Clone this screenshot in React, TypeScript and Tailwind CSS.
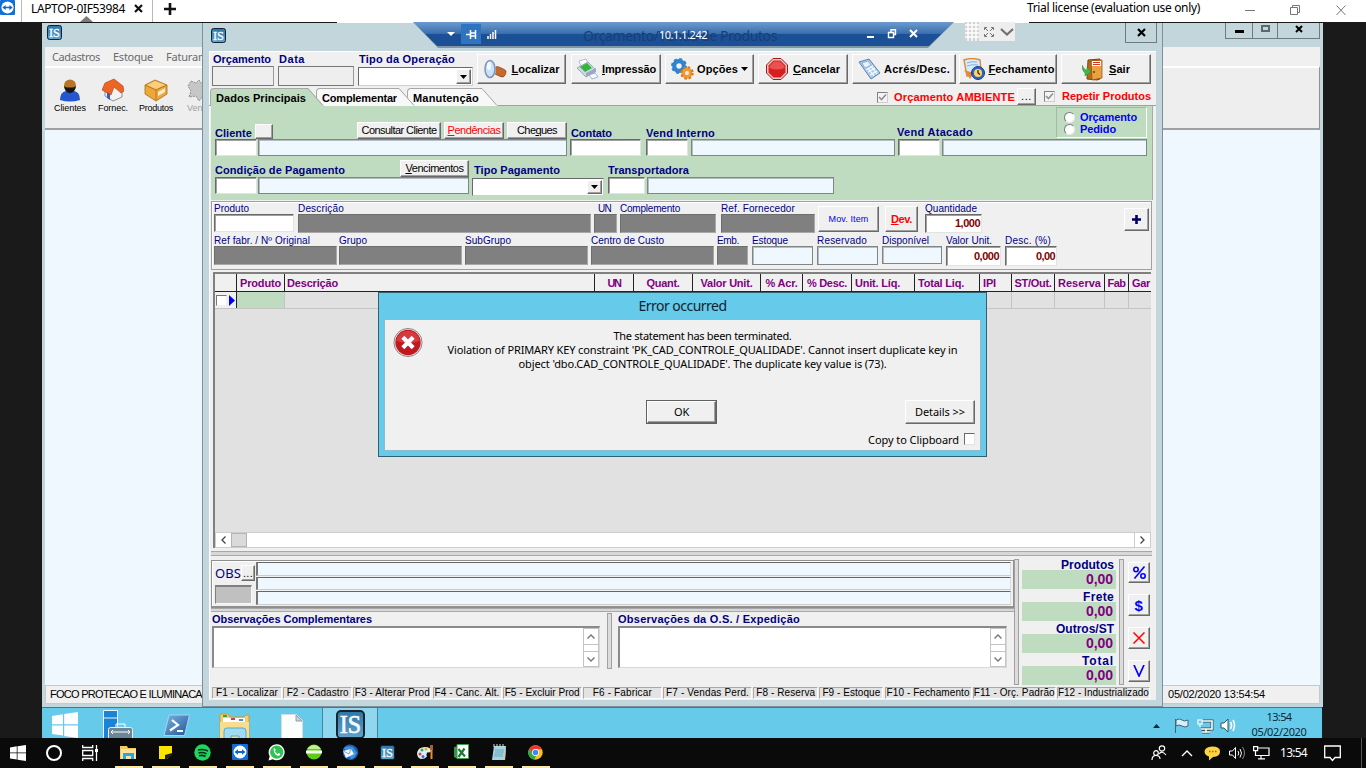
import React, { useLayoutEffect, useRef, useState } from "react";

type Kids = { children?: React.ReactNode };

/* One line of text whose tracking is adjusted so that it spans `w` pixels. */
function T({ w, c = "", children }: Kids & { w: number; c?: string }) {
  const ref = useRef<HTMLSpanElement>(null);
  const [ls, setLs] = useState(0);
  useLayoutEffect(() => {
    const el = ref.current;
    if (!el) return;
    const n = (el.textContent || "").length;
    setLs((w - el.getBoundingClientRect().width) / n);
  }, [w]);
  return (
    <span ref={ref} className={"block w-max shrink-0 whitespace-nowrap leading-none " + c} style={{ letterSpacing: ls + "px" }}>
      {children}
    </span>
  );
}

const ui = "font-['Noto_Sans',sans-serif]";
const bold = "text-[11px] font-bold text-[#000080]";

function Btn({ c = "", children }: Kids & { c?: string }) {
  return (
    <div className={"flex shrink-0 items-center justify-center border border-t-white border-l-white border-r-[#696969] border-b-[#696969] bg-[#f0f0f0] shadow-[inset_-1px_-1px_0_#a0a0a0] " + c}>
      {children}
    </div>
  );
}
const White = ({ c = "" }: { c?: string }) => (
  <div className={"shrink-0 border border-t-[#696969] border-l-[#696969] border-r-[#e3e3e3] border-b-[#e3e3e3] bg-white shadow-[inset_1px_1px_0_#a0a0a0] " + c} />
);
const Alice = ({ c = "" }: { c?: string }) => (
  <div className={"shrink-0 border border-[#808686] bg-[#f0f8ff] shadow-[inset_1px_1px_0_#b5bcc2] " + c} />
);
const Dark = ({ c = "" }: { c?: string }) => (
  <div className={"h-[19px] shrink-0 border border-[#6e6e6e] border-r-[#a8a8a8] border-b-[#a8a8a8] bg-[#808080] " + c} />
);
function Combo({ c = "" }: { c?: string }) {
  return (
    <div className={"flex shrink-0 justify-end border border-[#696969] border-r-[#d0d0d0] border-b-[#d0d0d0] bg-white p-px " + c}>
      <Btn c="w-[15px]">
        <svg width="7" height="4"><path d="M0 0h7L3.500 4z" fill="#000" /></svg>
      </Btn>
    </div>
  );
}
function Check() {
  return (
    <div className="flex h-[11px] w-[11px] shrink-0 items-center justify-center border border-t-[#808080] border-l-[#808080] border-r-[#cfcfcf] border-b-[#cfcfcf] bg-[#f4f4f4]">
      <svg width="9" height="9" viewBox="0 0 9 9"><path d="M1 4l2.500 2.500L8 1.500" fill="none" stroke="#909090" strokeWidth="1.600" /></svg>
    </div>
  );
}
function IS({ s }: { s: number }) {
  return (
    <svg width={s} height={s} viewBox="0 0 30 30" className="shrink-0">
      <defs>
        <linearGradient id="isg" x1="0" y1="0" x2="0" y2="1"><stop offset="0" stopColor="#2f76a5" /><stop offset="1" stopColor="#5fa3cd" /></linearGradient>
      </defs>
      <rect x="1" y="1" width="28" height="28" rx="4" fill="url(#isg)" stroke="#16232e" strokeWidth="2" />
      <text x="15" y="24" textAnchor="middle" fontFamily="Liberation Serif, serif" fontSize="26" textLength="22" lengthAdjust="spacingAndGlyphs" fill="#f4fafe" stroke="#f4fafe" strokeWidth=".7">IS</text>
    </svg>
  );
}
function TeamViewer({ s }: { s: number }) {
  return (
    <svg width={s} height={s} viewBox="0 0 16 16" className="shrink-0">
      <rect width="16" height="16" rx="1" fill="#1070d8" />
      <circle cx="8" cy="8" r="6.500" fill="#fff" />
      <path d="M2.500 8l3.500-2.800v1.900h4V5.200L13.500 8 10 10.800V8.900H6v1.900z" fill="#0e68cc" />
    </svg>
  );
}

/* ---------- toolbar artwork ---------- */
const Lens = () => (
  <svg width="23" height="21" viewBox="0 0 23 21">
    <rect x="10" y="8" width="12" height="8" rx="3" transform="rotate(24 14 12)" fill="#c8682a" stroke="#8a4215" strokeWidth=".7" />
    <path d="M7 3l5 6v5l-5 4z" fill="#b8bcc4" />
    <ellipse cx="6" cy="10" rx="5" ry="8.500" fill="#c9e2fa" stroke="#8397b5" strokeWidth="1.600" />
    <ellipse cx="5" cy="7" rx="2" ry="4" fill="#fff" opacity=".8" />
  </svg>
);
const Printer = () => (
  <svg width="22" height="22" viewBox="0 0 22 22">
    <path d="M3 3l7-2 3 6-7 3z" fill="#fff" stroke="#9db0cc" strokeWidth=".8" />
    <path d="M1 10l11-6 8 8-10 7z" fill="#cfd6e4" stroke="#8c99b5" strokeWidth=".8" />
    <path d="M4 9l7-4 5 5-7 4z" fill="#36b53c" />
    <path d="M10 19v-4l10-5v4z" fill="#9aa7c6" />
    <path d="M13 17l6-2 3 4-6 2z" fill="#f4f8ff" stroke="#8c99b5" strokeWidth=".7" />
  </svg>
);
const Gears = () => (
  <svg width="23" height="22" viewBox="0 0 23 22">
    <circle cx="8" cy="8" r="4.800" fill="none" stroke="#2f83cf" strokeWidth="4.200" />
    <circle cx="8" cy="8" r="6.900" fill="none" stroke="#2f83cf" strokeWidth="2.200" strokeDasharray="3 2.420" />
    <circle cx="16" cy="15" r="3.800" fill="none" stroke="#f29a2e" strokeWidth="3.400" />
    <circle cx="16" cy="15" r="5.700" fill="none" stroke="#d97a18" strokeWidth="2" strokeDasharray="2.500 1.980" />
  </svg>
);
const Stop = () => (
  <svg width="22" height="22" viewBox="0 0 22 22">
    <path d="M7 .5h8L21.500 7v8L15 21.500H7L.5 15V7z" fill="#f0c8c8" stroke="#a51616" />
    <path d="M7.500 2.500h7l5 5v7l-5 5h-7l-5-5v-7z" fill="#d81f1f" />
    <path d="M8 3.500h6l4.500 4.500v2q-7 3-15 0V8z" fill="#ec5050" />
  </svg>
);
const Calc = () => (
  <svg width="23" height="22" viewBox="0 0 23 22">
    <path d="M1 4l10-3 11 14-9 6z" fill="#a9cbee" stroke="#5f83ad" />
    <path d="M4 5l6-2 3 4-6 3z" fill="#e6f3ff" stroke="#7193bb" strokeWidth=".6" />
    <path d="M8 12l7-4M10 14l7-4M12 17l7-4M10 10l6 8M13 8l6 8" stroke="#fff" strokeWidth="1.200" />
  </svg>
);
const Closing = () => (
  <svg width="24" height="23" viewBox="0 0 24 23">
    <path d="M2 2q8-3 16 0l1 10q-7 4-14 6z" fill="#d9ebfb" stroke="#d98b33" strokeWidth="1.400" />
    <path d="M5 5q5-2 10-1M5 8q5-2 11-1" stroke="#86aedb" fill="none" />
    <path d="M2 12l6 9 4-6z" fill="#e08a3c" />
    <circle cx="16" cy="15" r="6.500" fill="#2f63c4" stroke="#173c88" />
    <circle cx="16" cy="15" r="4" fill="#ffd560" />
    <path d="M16 12v3l2 1.500" stroke="#222" fill="none" strokeWidth="1.200" />
  </svg>
);
const Exit = () => (
  <svg width="22" height="23" viewBox="0 0 22 23">
    <path d="M6 2l12-1v20l-3 1L5 21z" fill="#b96a18" stroke="#7a4410" />
    <path d="M9 3l11-1v18l-10 2z" fill="#e9a243" stroke="#8a4d10" strokeWidth=".7" />
    <rect x="10" y="3" width="9" height="5" fill="#fff" />
    <path d="M11 4.500h7M11 6.500h7" stroke="#e03030" />
    <circle cx="12" cy="14" r="1" fill="#6b3b08" />
    <path d="M0 7q2 5 5 5V9l4 5-6 4v-3Q0 13 0 7z" fill="#46b648" stroke="#2b8c34" strokeWidth=".5" />
  </svg>
);

/* ---------- remote control session title ---------- */
function ClientBar() {
  return (
    <header className={"flex h-[22px] shrink-0 bg-white text-[12px] text-black " + ui}>
      <TeamViewer s={15} />
      <div className="relative ml-[6px] flex w-[132px] border-x border-[#b8b8b8] pt-[3px] pl-[9px]">
        <T w={94} c="text-[12px]">LAPTOP-0IF53984</T>
        <svg className="mt-px ml-[9px]" width="9" height="9"><path d="M1 1l7 7M8 1l-7 7" stroke="#111" strokeWidth="2.200" /></svg>
        <svg className="absolute bottom-0 left-[58px]" width="13" height="6"><path d="M0 6L6.500 0 13 6z" fill="#7a7a7a" /></svg>
      </div>
      <svg className="mt-[3px] ml-[11px]" width="12" height="12"><path d="M6 0v12M0 6h12" stroke="#111" strokeWidth="2.600" /></svg>
      <div className="ml-auto flex pr-[19px]">
        <T w={173} c="pt-[2px] text-[12px]">Trial license (evaluation use only)</T>
        <svg className="mt-[4px] ml-[44px]" width="103" height="13" fill="none" stroke="#777">
          <path d="M1 6.500h10M92.500 1.500l9 9.500M101.500 1.500l-9 9.500" /><path d="M46.500 3.500h7v7h-7zM48.500 3.500v-2h7v7h-2" />
        </svg>
      </div>
    </header>
  );
}

/* ---------- main application window behind ---------- */
function BackWindow() {
  return (
    <section className="absolute top-px left-0 flex h-[684px] w-[1281px] flex-col bg-[#c3d6dc] px-[3px] pb-[3px]">
      <div className="flex h-[24px] shrink-0 pl-[2px]">
        <div className="pt-[2px]"><IS s={15} /></div>
        <div className="ml-auto flex h-[16px] text-black">
          <div className="flex w-[28px] items-center justify-center border-x border-b border-[#6e7c82]"><div className="mt-[1px] h-[3px] w-[9px] bg-black" /></div>
          <div className="flex w-[24px] items-center justify-center border-b border-[#6e7c82]"><div className="-mt-[4px] h-[7px] w-[9px] border-2 border-[#5c6a70]" /></div>
          <div className="flex w-[43px] items-center justify-center border-x border-b border-[#6e7c82]">
            <svg width="8" height="8" className="-mt-[4px]"><path d="M1 1l6 6M7 1L1 7" stroke="#000" strokeWidth="2" /></svg>
          </div>
        </div>
      </div>
      <nav className={"flex h-[19px] shrink-0 gap-[13px] bg-[#f0f0f0] pt-[4px] pl-[7px] text-[11px] text-[#6b6b6b] " + ui}>
        <T w={48}>Cadastros</T><T w={40}>Estoque</T><T w={42}>Faturam</T>
      </nav>
      <div className="flex h-[64px] shrink-0 border-t-2 border-r border-b-2 border-t-white border-r-[#909090] border-b-[#a0a0a0] bg-[#eeeeee] pt-[10px] pl-[8px] font-['Liberation_Sans',sans-serif] text-black">
        <div className="flex w-[34px] flex-col items-center">
          <svg width="22" height="24" viewBox="0 0 22 24"><path d="M1 22q0-8 6-9h8q6 1 6 9-10 3-20 0z" fill="#2456cf" /><circle cx="11" cy="7.500" r="6" fill="#b87528" /><path d="M5 8q1 7 6 7t6-7q-2 2-6 1.500Q7 10 5 8z" fill="#151515" /></svg>
          <T w={32} c="mt-[2px] text-[9px]">Clientes</T>
        </div>
        <div className="ml-[9px] flex w-[34px] flex-col items-center">
          <svg width="22" height="24" viewBox="0 0 22 24"><path d="M3 10l8-7 9 7v9l-9 4-8-5z" fill="#f2f2f4" stroke="#777" strokeWidth=".8" /><path d="M0 12l3-7 9-4 9 7 1 5-3 2-7-6-3 8z" fill="#ee6422" stroke="#b13c0c" strokeWidth=".6" /><path d="M5 14l3 2v6l-3-2z" fill="#3c5ac0" /></svg>
          <T w={30} c="mt-[2px] text-[9px]">Fornec.</T>
        </div>
        <div className="ml-[9px] flex w-[34px] flex-col items-center">
          <svg width="24" height="24" viewBox="0 0 24 24"><path d="M1 7l10-5 12 5v9l-11 7L1 16z" fill="#eda83b" stroke="#a96b16" strokeWidth=".8" /><path d="M1 7l11 5 11-5M12 12v11" fill="none" stroke="#b87820" /><path d="M3 7l8-4 10 4-9 4z" fill="#f9cf7d" /><path d="M14 14l7-4v4l-7 4z" fill="#f5ead4" /></svg>
          <T w={34} c="mt-[2px] text-[9px]">Produtos</T>
        </div>
        <div className="ml-[14px] flex w-[34px] flex-col items-start text-[#a0a0a0]">
          <svg width="24" height="24" viewBox="0 0 24 24"><path d="M4 3l5 2 3-3 3 4 5 1-2 5 4 5-6 1-4 5-3-5-7 1 2-6-3-5z" fill="#c6c6c6" stroke="#8e8e8e" strokeDasharray="2 1" /></svg>
          <T w={30} c="mt-[2px] text-[9px]">Vendas</T>
        </div>
      </div>
      <div className="min-h-0 flex-1 bg-[#f0f8ff]" />
      <footer className="flex h-[19px] shrink-0 items-center border border-[#c9c9c9] bg-[#f0f0f0] pl-[4px] text-[11px] text-black">
        <T w={152} c="text-[11px]">FOCO PROTECAO E ILUMINACA</T>
        <div className="ml-auto w-[151px]"><T w={97} c="text-[11px]">05/02/2020 13:54:54</T></div>
      </footer>
    </section>
  );
}

/* ---------- order window ---------- */
function Tab({ w, active, body, children, z }: Kids & { w: number; active?: boolean; body: string; z: string }) {
  const fill = active ? "#c0dcc0" : "#f8f8f8";
  return (
    <div className={"relative flex h-[18px] shrink-0 " + z}>
      <div className={"flex items-center rounded-tl-[4px] border-t border-l border-[#a8a8a8] pl-[5px] " + body + (active ? " bg-[#c0dcc0]" : " bg-[#f8f8f8]")}>
        <T w={w} c="pt-px text-[11px] font-bold text-black">{children}</T>
      </div>
      <svg width="18" height="18" className="-ml-px">
        <path d="M0 0h2L18 18H0z" fill={fill} /><path d="M0 .5h2L17 17.500" fill="none" stroke="#a0a0a0" />
      </svg>
    </div>
  );
}

function TopTools() {
  const t = "text-[11px] font-bold text-black";
  return (
    <div className="flex h-[37px] shrink-0 items-start pt-[3px] pl-[3px]">
      <div className="w-[62px]"><T w={58} c={bold + " ml-px pb-px"}>Orçamento</T><div className="h-[20px] border border-[#777] border-r-[#999] bg-[#eeeeee]" /></div>
      <div className="ml-[4px] w-[76px]"><T w={26} c={bold + " ml-px pb-px"}>Data</T><div className="h-[20px] border border-[#777] border-r-[#999] bg-[#eeeeee]" /></div>
      <div className="ml-[4px] w-[115px]"><T w={96} c={bold + " ml-px pb-px"}>Tipo da Operação</T><Combo c="mt-px h-[19px]" /></div>
      <Btn c="ml-[4px] h-[30px] w-[89px] gap-[5px]"><Lens /><T w={48} c={t}><u>L</u>ocalizar</T></Btn>
      <Btn c="ml-[5px] h-[30px] w-[90px] gap-[4px]"><Printer /><T w={54} c={t}><u>I</u>mpressão</T></Btn>
      <Btn c="ml-[4px] h-[30px] w-[89px] gap-[3px]"><Gears /><T w={41} c={t}>Opções</T><svg width="7" height="4"><path d="M0 0h7L3.500 4z" /></svg></Btn>
      <Btn c="ml-[4px] h-[30px] w-[90px] gap-[5px]"><Stop /><T w={47} c={t}><u>C</u>ancelar</T></Btn>
      <Btn c="ml-[4px] h-[30px] w-[104px] gap-[3px]"><Calc /><T w={66} c={t}>Acrés/Desc.</T></Btn>
      <Btn c="ml-[3px] h-[30px] w-[98px] gap-[3px]"><Closing /><T w={66} c={t}><u>F</u>echamento</T></Btn>
      <Btn c="ml-[4px] h-[30px] w-[90px] gap-[5px]"><Exit /><T w={21} c={t}><u>S</u>air</T></Btn>
    </div>
  );
}

function TabRow() {
  return (
    <div className="flex h-[18px] shrink-0 border-b border-[#a0a0a0] pl-px">
      <Tab w={90} active body="w-[97px]" z="z-30">Dados Principais</Tab>
      <div className="-ml-[8px]"><Tab w={75} body="w-[82px]" z="z-20">Complementar</Tab></div>
      <div className="-ml-[8px]"><Tab w={66} body="w-[74px]" z="z-10">Manutenção</Tab></div>
      <div className="ml-auto flex items-start pr-[5px]">
        <div className="pt-[4px]"><Check /></div>
        <T w={121} c="mt-[4px] ml-[6px] text-[11px] font-bold text-[#ff0000]">Orçamento AMBIENTE</T>
        <Btn c="ml-[2px] h-[17px] w-[19px]"><T w={11} c="text-[11px] text-black">...</T></Btn>
        <div className="ml-[8px] pt-[3px]"><Check /></div>
        <T w={89} c="mt-[3px] ml-[7px] text-[11px] font-bold text-[#ff0000]">Repetir Produtos</T>
      </div>
    </div>
  );
}

const Radio = () => <span className="h-[11px] w-[11px] rounded-full border border-t-[#7c7c7c] border-l-[#7c7c7c] border-r-[#e8e8e8] border-b-[#e8e8e8] bg-white" />;

function GreenPanel() {
  const b = "h-[17px] text-[11px] text-black";
  return (
    <div className="ml-[2px] h-[94px] w-[942px] shrink-0 border-r border-[#9fb09f] bg-[#c0dcc0] pl-[4px]">
      <div className="flex h-[50px] items-end">
        <div className="w-[352px]">
          <div className="flex h-[17px] items-end">
            <T w={37} c={bold}>Cliente</T>
            <Btn c="ml-[3px] h-[15px] w-[18px]" />
            <Btn c={b + " ml-auto w-[84px]"}><T w={75} c="text-[11px]">Consultar Cliente</T></Btn>
            <Btn c={b + " ml-[3px] w-[60px]"}><T w={53} c="text-[11px] text-[#ff0000]"><u>P</u>endências</T></Btn>
            <Btn c={b + " ml-[3px] w-[60px]"}><T w={40} c="text-[11px]">Che<u>q</u>ues</T></Btn>
          </div>
          <div className="flex"><White c="h-[17px] w-[42px]" /><Alice c="ml-px h-[17px] w-[309px]" /></div>
        </div>
        <div className="ml-[3px] w-[71px]"><T w={41} c={bold + " ml-px"}>Contato</T><White c="h-[17px]" /></div>
        <div className="ml-[5px] w-[249px]">
          <T w={69} c={bold}>Vend Interno</T>
          <div className="flex"><White c="h-[17px] w-[42px]" /><Alice c="ml-[3px] h-[17px] w-[204px]" /></div>
        </div>
        <div className="ml-[3px] w-[249px]">
          <div className="flex h-[32px] items-end">
            <T w={76} c={bold + " -ml-px pb-px"}>Vend Atacado</T>
            <div className="mb-px ml-auto flex h-[31px] w-[91px] flex-col gap-px border border-[#a4b8a4] border-r-white border-b-white pt-[4px] pl-[7px]">
              <div className="flex items-center gap-[5px]"><Radio /><T w={57} c="text-[11px] font-bold text-[#0000ff]">Orçamento</T></div>
              <div className="flex items-center gap-[5px]"><Radio /><T w={36} c="text-[11px] font-bold text-[#0000ff]">Pedido</T></div>
            </div>
          </div>
          <div className="flex"><White c="h-[17px] w-[42px]" /><Alice c="ml-[2px] h-[17px] w-[205px]" /></div>
        </div>
      </div>
      <div className="mt-[3px] flex">
        <div className="w-[254px]">
          <div className="flex h-[18px] items-end">
            <T w={130} c={bold + " pb-px"}>Condição de Pagamento</T>
            <Btn c={b + " ml-auto w-[69px]"}><T w={58} c="text-[11px]"><u>V</u>encimentos</T></Btn>
          </div>
          <div className="flex"><White c="h-[17px] w-[42px]" /><Alice c="ml-px h-[17px] w-[211px]" /></div>
        </div>
        <div className="ml-[3px] w-[132px] pt-[6px]"><T w={86} c={bold + " ml-[2px]"}>Tipo Pagamento</T><Combo c="mt-[2px] h-[18px]" /></div>
        <div className="ml-[4px] w-[226px] pt-[6px]">
          <T w={81} c={bold}>Transportadora</T>
          <div className="mt-px flex"><White c="h-[17px] w-[37px]" /><Alice c="ml-[2px] h-[17px] w-[187px]" /></div>
        </div>
      </div>
    </div>
  );
}

function F({ label, w, c, lc = "", children }: Kids & { label: string; w: number; c: string; lc?: string }) {
  return (
    <div className={"shrink-0 " + c}>
      <div className={"flex h-[10px] items-end " + lc}><T w={w} c="text-[10px] text-[#000080]">{label}</T></div>
      {children}
    </div>
  );
}
function Num({ v, w, c = "" }: { v: string; w: number; c?: string }) {
  return (
    <div className={"flex items-center justify-end border border-t-[#696969] border-l-[#696969] border-r-[#e3e3e3] border-b-[#e3e3e3] bg-white pr-px shadow-[inset_1px_1px_0_#a0a0a0] " + c}>
      <T w={w} c="text-[11px] font-bold text-[#800000]">{v}</T>
    </div>
  );
}

function ItemPanel() {
  return (
    <div className="mt-px ml-[2px] h-[69px] w-[941px] shrink-0 border border-[#a0a0a0] bg-[#f0f0f0] pt-[2px] pl-[2px] shadow-[inset_1px_1px_0_#fff]">
      <div className="flex h-[32px]">
        <F label="Produto" w={35} c="w-[80px]"><White c="h-[18px]" /></F>
        <F label="Descrição" w={46} c="ml-[4px] w-[293px]"><Dark /></F>
        <F label="UN" w={13} c="ml-[3px] w-[23px]" lc="pl-[4px]"><Dark /></F>
        <F label="Complemento" w={60} c="ml-[3px] w-[96px]"><Dark /></F>
        <F label="Ref. Fornecedor" w={74} c="ml-[5px] w-[94px]"><Dark /></F>
        <Btn c="mt-[2px] ml-[3px] h-[26px] w-[61px]"><T w={40} c="text-[9px] text-[#0000ff]">Mov. Item</T></Btn>
        <Btn c="mt-[2px] ml-[6px] h-[26px] w-[33px]"><T w={21} c="text-[11px] font-bold text-[#ff0000]"><u>D</u>ev.</T></Btn>
        <F label="Quantidade" w={52} c="ml-[7px] w-[57px]"><Num v="1,000" w={25} c="h-[19px]" /></F>
        <Btn c="mt-[4px] mr-[2px] ml-auto h-[23px] w-[25px]"><svg width="9" height="9"><path d="M4.500 0v9M0 4.500h9" stroke="#000060" strokeWidth="2.600" /></svg></Btn>
      </div>
      <div className="flex">
        <F label="Ref fabr. / Nº Original" w={96} c="w-[123px]"><Dark /></F>
        <F label="Grupo" w={28} c="ml-[2px] w-[123px]"><Dark /></F>
        <F label="SubGrupo" w={46} c="ml-[3px] w-[123px]"><Dark /></F>
        <F label="Centro de Custo" w={73} c="ml-[3px] w-[123px]"><Dark /></F>
        <F label="Emb." w={22} c="ml-[3px] w-[31px]"><Dark /></F>
        <F label="Estoque" w={36} c="ml-[4px] w-[61px]"><Alice c="h-[19px]" /></F>
        <F label="Reservado" w={50} c="ml-[4px] w-[61px]"><Alice c="h-[19px]" /></F>
        <F label="Disponível" w={47} c="ml-[4px] w-[60px]"><Alice c="h-[18px]" /></F>
        <F label="Valor Unit." w={46} c="ml-[4px] w-[55px]"><Num v="0,000" w={25} c="h-[20px]" /></F>
        <F label="Desc. (%)" w={46} c="ml-[4px] w-[52px]"><Num v="0,00" w={19} c="h-[20px]" /></F>
      </div>
    </div>
  );
}

const cols: [string, number, string, string][] = [
  ["", 0, "w-[22px]", "bg-[#f0f0f0]"],
  ["Produto", 41, "w-[48px] pl-[3px]", "bg-[#c0dcc0]"],
  ["Descrição", 51, "w-[310px] pl-[2px]", ""],
  ["UN", 13, "w-[39px] justify-center", ""],
  ["Quant.", 33, "w-[59px] justify-center", ""],
  ["Valor Unit.", 52, "w-[68px] justify-center", ""],
  ["% Acr.", 32, "w-[42px] justify-center", ""],
  ["% Desc.", 40, "w-[49px] justify-center", ""],
  ["Unit. Líq.", 45, "w-[63px] pl-[3px]", ""],
  ["Total Liq.", 46, "w-[65px] pl-[3px]", ""],
  ["IPI", 13, "w-[32px] pl-[3px]", ""],
  ["ST/Out.", 37, "w-[43px] justify-center", ""],
  ["Reserva", 43, "w-[50px] justify-center", ""],
  ["Fab", 18, "w-[24px] justify-center", ""],
  ["Gar", 18, "flex-1 pl-[3px]", ""],
];

function ItemGrid() {
  return (
    <div className="mt-[2px] ml-[4px] flex h-[276px] w-[938px] shrink-0 flex-col border-t-2 border-l-2 border-[#808080] bg-[#e1e1e1]">
      <div className="flex h-[18px] shrink-0 border-b border-[#222] bg-[#f0f0f0]">
        {cols.map(([n, w, c], i) => (
          <div key={i} className={"flex shrink-0 items-center border-r border-[#222] last:border-r-0 " + c}>
            {n && <T w={w} c="pt-px text-[11px] font-bold text-[#800080]">{n}</T>}
          </div>
        ))}
      </div>
      <div className="flex h-[17px] shrink-0 border-b border-[#c4c4c4]">
        {cols.map(([, , c, bg], i) => (
          <div key={i} className={"flex h-[16px] shrink-0 items-center border-r border-[#c4c4c4] first:border-[#222] last:border-r-0 " + c + " " + bg}>
            {i === 0 && (
              <div className="flex w-[21px] items-center gap-[2px] pl-px">
                <div className="h-[11px] w-[11px] shrink-0 border border-t-[#777] border-l-[#777] border-r-[#eee] border-b-[#eee] bg-white" />
                <svg width="6" height="11" className="shrink-0"><path d="M0 0l6 5.500L0 11z" fill="#0000ff" /></svg>
              </div>
            )}
          </div>
        ))}
      </div>
      <div className="mt-auto flex h-[16px] shrink-0 border border-[#cdcdcd] bg-white">
        <div className="flex w-[15px] items-center justify-center"><svg width="5" height="8"><path d="M4.500 .5L1 4l3.500 3.500" fill="none" stroke="#444" strokeWidth="1.300" /></svg></div>
        <div className="w-[16px] border border-[#b4b4b4] bg-[#dadada]" />
        <div className="ml-auto flex w-[16px] items-center justify-center border-l border-[#cdcdcd]"><svg width="5" height="8"><path d="M.5 .5L4 4 .5 7.500" fill="none" stroke="#444" strokeWidth="1.300" /></svg></div>
      </div>
    </div>
  );
}

function Memo({ title, w, c }: { title: string; w: number; c: string }) {
  return (
    <div className={"shrink-0 " + c}>
      <T w={w} c="pb-px text-[11px] font-bold text-[#000080]">{title}</T>
      <div className="flex h-[42px] justify-end border-t-2 border-l-2 border-r border-b border-t-[#8a8a8a] border-l-[#8a8a8a] border-r-[#d8d8d8] border-b-[#d8d8d8] bg-white">
        <div className="flex w-[16px] flex-col border border-[#c4c4c4]">
          <div className="flex h-[15px] items-center justify-center"><svg width="8" height="5"><path d="M.5 4.500L4 1l3.500 3.500" fill="none" stroke="#777" strokeWidth="1.400" /></svg></div>
          <div className="flex-1 border-y border-[#c4c4c4]" />
          <div className="flex h-[14px] items-center justify-center"><svg width="8" height="5"><path d="M.5 .5L4 4 7.500 .5" fill="none" stroke="#777" strokeWidth="1.400" /></svg></div>
        </div>
      </div>
    </div>
  );
}

const fkeys: [string, number, string][] = [
  ["F1 - Localizar", 62, "w-[70px]"], ["F2 - Cadastro", 62, "w-[69px]"], ["F3 - Alterar Prod", 75, "w-[78px]"],
  ["F4 - Canc. Alt.", 65, "w-[69px]"], ["F5 - Excluir Prod", 75, "w-[79px]"], ["F6 - Fabricar", 59, "w-[79px]"],
  ["F7 - Vendas Perd.", 83, "w-[89px]"], ["F8 - Reserva", 59, "w-[65px]"], ["F9 - Estoque", 58, "w-[64px]"],
  ["F10 - Fechamento", 83, "w-[87px]"], ["F11 - Orç. Padrão", 81, "w-[83px]"], ["F12 - Industrializado", 91, "w-[93px]"],
];

const totals: [string, number][] = [["Produtos", 53], ["Frete", 31], ["Outros/ST", 58], ["Total", 32]];

function Bottom() {
  return (
    <div className="mt-[10px] ml-[2px] flex h-[126px] shrink-0">
      <div className="w-[803px]">
        <div className="mt-px flex h-[48px] border-t border-l border-r border-b-2 border-[#909090] bg-[#f0f0f0] pt-px shadow-[inset_1px_1px_0_#fff]">
          <div className="w-[44px] pt-[3px] pl-[3px]">
            <div className="flex items-center">
              <T w={26} c="font-['Noto_Sans',sans-serif] text-[13px] text-[#000080]">OBS</T>
              <Btn c="h-[16px] w-[14px]"><T w={10} c="text-[11px] text-black">...</T></Btn>
            </div>
            <div className="mt-[4px] h-[19px] w-[37px] border border-t-2 border-t-[#808080] border-l-[#808080] border-r-[#f8f8f8] border-b-[#f8f8f8] bg-[#c0c0c0]" />
          </div>
          <div className="flex w-[755px] flex-col gap-px">
            {[0, 1, 2].map((i) => (
              <div key={i} className="h-[13.500px] border-t border-l-2 border-r border-b border-t-[#666] border-l-[#777] border-r-[#ddd] border-b-[#ccc] bg-[#f0f8ff]" />
            ))}
          </div>
        </div>
        <div className="h-[4px] border-y border-[#a8a8a8] bg-[#d8d8d8]" />
        <div className="flex pt-px">
          <Memo title="Observações Complementares" w={160} c="ml-px w-[388px] pt-px" />
          <div className="ml-[7px] h-[56px] w-[5px] border border-[#a0a0a0] bg-[#dcdcdc]" />
          <Memo title="Observações da O.S. / Expedição" w={182} c="ml-[6px] w-[389px] pt-px" />
        </div>
      </div>
      <div className="w-[5px] border border-[#a0a0a0] bg-[#dcdcdc]" />
      <div className="ml-[3px] w-[94px]">
        {totals.map(([n, w]) => (
          <div key={n} className="flex h-[32px] flex-col items-end">
            <div className="flex h-[11px] items-center pr-[2px]"><T w={w} c="text-[12px] font-bold text-[#000080]">{n}</T></div>
            <div className="flex h-[19px] w-[94px] items-center justify-end bg-[#c0dcc0] pr-[3px] pb-[2px]"><T w={27} c="text-[14px] font-bold text-[#800080]">0,00</T></div>
          </div>
        ))}
      </div>
      <div className="ml-[3px] w-[5px] border border-[#a0a0a0] bg-[#dcdcdc]" />
      <div className="flex flex-col gap-[11px] pt-[3px] pl-[4px]">
        <Btn c="h-[21px] w-[22px]"><svg width="13" height="13" fill="none" stroke="#0000ff" strokeWidth="1.600"><circle cx="3" cy="3.500" r="2.200" /><circle cx="10" cy="10" r="2.200" /><path d="M11.500 .5l-10 12" /></svg></Btn>
        <Btn c="h-[22px] w-[22px]"><T w={9} c="text-[15px] font-bold text-[#0000ff]">$</T></Btn>
        <Btn c="h-[22px] w-[22px]"><svg width="12" height="12"><path d="M.5 .5l11 11M11.500 .5l-11 11" stroke="#ff0000" strokeWidth="1.500" /></svg></Btn>
        <Btn c="h-[22px] w-[22px]"><svg width="12" height="12"><path d="M1 0l5 11 5-11" fill="none" stroke="#0000ff" strokeWidth="1.700" /></svg></Btn>
      </div>
    </div>
  );
}

function OrderWindow() {
  return (
    <section className="absolute top-px left-[160px] flex h-[684px] w-[961px] flex-col border-x border-b border-[#7e9099] bg-[#c3d6dc] px-[6px] pb-[6px]">
      <div className="flex h-[28px] shrink-0 justify-between pl-[2px]">
        <div className="pt-[5px]"><IS s={15} /></div>
        <div className="-mr-px flex h-[20px] w-[32px] items-center justify-center border border-t-0 border-[#6e7c82]"><svg width="9" height="9"><path d="M1 1l7 7M8 1L1 8" stroke="#000" strokeWidth="2.200" /></svg></div>
      </div>
      <div className="flex min-h-0 flex-1 flex-col overflow-hidden bg-[#f0f0f0] shadow-[inset_1px_1px_0_#fff]">
        <TopTools />
        <TabRow />
        <GreenPanel />
        <ItemPanel />
        <ItemGrid />
        <div className="mt-[3px] -mb-[7px] ml-[2px] h-[5px] w-[941px] shrink-0 border-y border-[#a8a8a8] bg-[#d8d8d8]" />
        <Bottom />
        <div className="mt-[2px] ml-[3px] flex h-[12px] w-[938px] shrink-0 justify-between">
          {fkeys.map(([n, w, c]) => (
            <div key={n} className={"flex shrink-0 items-center justify-center border border-t-[#a8a8a8] border-l-[#a8a8a8] border-r-white border-b-white bg-[#e3e3e3] " + c}>
              <T w={w} c="text-[10px] text-black">{n}</T>
            </div>
          ))}
        </div>
      </div>
    </section>
  );
}

function SessionBar() {
  return (
    <>
      <div className="absolute top-0 left-[371px] h-[26px] w-[541px] bg-[#8095a8] [clip-path:polygon(0_0,100%_0,515px_100%,25px_100%)]">
        <div className={"flex h-[24px] w-[541px] items-center bg-linear-to-b from-[#6c9bcf] from-0% via-[#3a6fae] via-48% to-[#1c5096] to-52% text-white [clip-path:polygon(0_0,100%_0,516px_100%,24px_100%)] " + ui}>
          <svg className="ml-[34px]" width="8" height="4"><path d="M0 0h8L4 4z" fill="#fff" /></svg>
          <div className="ml-[6px] flex h-[20px] w-[20px] items-center justify-center bg-[#2e74c0]"><svg width="11" height="9"><path d="M0 4.500h4M4.500 0v9M9.500 0v9M5 3h4M5 6h4" stroke="#fff" strokeWidth="1.500" /></svg></div>
          <svg className="ml-[6px]" width="11" height="10"><path d="M1 10V7M3.500 10V5M6 10V3M8.500 10V1" stroke="#fff" strokeWidth="1.500" /></svg>
          <div className="relative ml-[85px] h-[20px] w-[195px]">
            <T w={194} c="pt-[5px] text-[14px] text-[#153f78]">Orçamento/Venda de Produtos</T>
            <div className="absolute top-[5px] left-[76px]"><T w={48} c="text-[11px]">10.1.1.242</T></div>
          </div>
          <svg className="ml-[89px]" width="52" height="10" fill="none" stroke="#fff"><path d="M0 8h7" strokeWidth="2" /><path d="M21.500 3.500h5v5h-5zM24 3V.8h4.500V5.500H27" strokeWidth="1.400" /><path d="M43 1l7 7M50 1l-7 7" strokeWidth="2" /></svg>
        </div>
      </div>
      <div className="absolute top-0 left-[923px] flex h-[19px] w-[50px] bg-[#eeeeee]">
        <svg width="14" height="19" stroke="#fff" strokeWidth="1.400"><rect width="14" height="19" fill="#d3d3d3" stroke="none" /><path d="M0 3h14M0 7h14M0 11h14M0 15h14M3 0v19M7 0v19M11 0v19" /></svg>
        <svg className="mt-[5px] ml-[5px]" width="10" height="10" fill="none" stroke="#777"><path d="M.5 3V.5H3M7 .5h2.500V3M9.500 7v2.500H7M3 9.500H.5V7M1 1l3 3M9 1L6 4M9 9L6 6M1 9l3-3" /></svg>
        <svg className="mt-[6px] ml-[6px]" width="14" height="8"><path d="M1 1l6 5.500L13 1" fill="none" stroke="#707070" strokeWidth="2.200" /></svg>
      </div>
    </>
  );
}

function ErrorDialog() {
  return (
    <section className={"absolute top-[270px] left-[336px] flex h-[165px] w-[609px] flex-col border border-[#33606f] bg-[#66caea] px-[6px] pb-[6px] text-black " + ui}>
      <div className="flex h-[27px] shrink-0 items-center justify-center pb-px"><T w={88} c="text-[14px] text-[#10242c]">Error occurred</T></div>
      <div className="flex flex-1 flex-col bg-[#f0f0f0] pr-[5px] pl-[8px] shadow-[0_0_0_1px_#8fbccb]">
        <div className="flex h-[80px]">
          <svg className="mt-[7px] shrink-0" width="30" height="31" viewBox="0 0 32 32">
            <circle cx="16" cy="16" r="15" fill="#e6e2e2" stroke="#8a8080" /><circle cx="16" cy="16" r="13.500" fill="#c0181e" />
            <path d="M3.500 14a12.700 12.700 0 0125 0q-12 5-25 0z" fill="#e0484c" opacity=".7" />
            <path d="M10.500 10.500l11 11M21.500 10.500l-11 11" stroke="#fff" strokeWidth="4.500" />
          </svg>
          <div className="mt-[10px] ml-[7px] flex flex-1 flex-col items-center gap-[3px] text-[11px]">
            <T w={178}>The statement has been terminated.</T>
            <T w={510}>Violation of PRIMARY KEY constraint 'PK_CAD_CONTROLE_QUALIDADE'. Cannot insert duplicate key in</T>
            <T w={368}>object 'dbo.CAD_CONTROLE_QUALIDADE'. The duplicate key value is (73).</T>
          </div>
        </div>
        <div className="flex justify-end">
          <div className="mr-[188px] border border-[#606060]"><Btn c="h-[22px] w-[69px] pb-px"><T w={15} c="text-[11px]">OK</T></Btn></div>
          <Btn c="h-[24px] w-[70px] pb-px"><T w={50} c="text-[11px]">Details &gt;&gt;</T></Btn>
        </div>
        <div className="mt-[9px] flex items-center justify-end gap-[5px]">
          <T w={91} c="text-[11px]">Copy to Clipboard</T>
          <div className="h-[12px] w-[11px] border border-t-[#696969] border-l-[#696969] border-r-[#e3e3e3] border-b-[#e3e3e3] bg-white" />
        </div>
      </div>
    </section>
  );
}

const Win = ({ s }: { s: number }) => (
  <svg width={s} height={s} viewBox="0 0 26 26"><path d="M0 4l11-1.800v10H0zM12.200 2L26 0v12.200H12.200zM0 13.500h11v10L0 22zM12.200 13.500H26V26l-13.800-2z" fill="#fff" /></svg>
);

function RemoteTaskbar() {
  return (
    <div className={"absolute top-[685px] left-0 flex h-[31px] w-[1280px] items-start overflow-hidden border-t border-[#5d7078] bg-[#66caea] text-[11px] text-[#0c2a36] " + ui}>
      <div className="mt-[4px] ml-[10px]"><Win s={26} /></div>
      <svg className="mt-[2px] ml-[25px]" width="30" height="34"><path d="M.5 .5h14v30H.5z" fill="#1b83d6" stroke="#e8f5fd" /><path d="M0 8h15" stroke="#e8f5fd" /><rect x="5.500" y="17.500" width="24" height="16" rx="2" fill="#6d8598" stroke="#e8f0f5" /><path d="M13 17v-3h9v3M8 22h19M10 20l-2 2 2 2M25 20l2 2-2 2" stroke="#fff" fill="none" /></svg>
      <svg className="mt-[6px] ml-[30px]" width="28" height="23"><defs><linearGradient id="ps" x1="0" y1="0" x2="1" y2="1"><stop offset="0" stopColor="#7fb4e0" /><stop offset="1" stopColor="#1b5596" /></linearGradient></defs><path d="M6 1h20.500l-5 20.500H1z" fill="url(#ps)" stroke="#a9d3ee" /><path d="M9 6l6 5-8 5.500M14 17h6" stroke="#fff" strokeWidth="2.200" fill="none" /></svg>
      <svg className="mt-[4px] ml-[28px]" width="31" height="32"><path d="M1 2h8l2 3h14l2-2h3v28H1z" fill="#f3cf72" stroke="#c99a3a" /><path d="M4 6h22v4H4z" fill="#fff" /><path d="M4 4h4" stroke="#3aa63a" strokeWidth="2" /><path d="M12 7h4" stroke="#d04040" strokeWidth="2" /><path d="M20 8h4" stroke="#4a90d0" strokeWidth="2" /><path d="M1 10h29v21H1z" fill="#f8dd90" /><path d="M5 19q0-3 3-3h16q3 0 3 3v12h-7v-7h-8v7H5z" fill="#9fdcf2" stroke="#5aa8c8" /></svg>
      <svg className="mt-[6px] ml-[31px]" width="22" height="30"><path d="M.5 .5h15l6 6V30H.5z" fill="#fdfdfd" stroke="#d3dde2" /><path d="M15 1v6h6z" fill="#c9d3d8" stroke="#8fa0aa" /></svg>
      <div className="ml-[19px] flex h-[31px] w-[56px] justify-center border-x border-[#4a8396] bg-[#8fd7ee] pt-[2px]"><IS s={29} /></div>
      <svg className="mt-[16px] ml-auto" width="7" height="4"><path d="M0 4L3.500 0 7 4z" fill="#102830" /></svg>
      <svg className="mt-[9px] ml-[14px]" width="62" height="17" fill="none" stroke="#fff" strokeWidth="1.600">
        <path d="M1.500 2v14M2 3q4-2 6 0t6 0v6q-3 2-6 0t-6 0z" fill="#d8eff8" stroke="#3e6675" strokeWidth="1" />
        <path d="M28 4h10v8H27M32 12v3M28 15h8" stroke="#35515c" strokeWidth="3" /><path d="M28 4h10v8H27M32 12v3M28 15h8" /><path d="M24 3h4v4h-4zM26 7v3" stroke="#d7f0fa" />
        <path d="M47 6h3l4-4v13l-4-4h-3z" fill="#fff" stroke="#35515c" strokeWidth="1" /><path d="M56.500 5q2 3 0 7M59 3q3 5 0 11" />
      </svg>
      <div className="mt-[3px] mr-[15px] ml-[15px] flex w-[56px] flex-col items-center gap-[4px]"><T w={25}>13:54</T><T w={55}>05/02/2020</T></div>
    </div>
  );
}

const apps: React.ReactNode[] = [
  <svg width="17" height="15"><path d="M0 1h7l1 2h8v11H0z" fill="#f5c95c" /><path d="M1 4h15v10H1z" fill="#fde39a" /><path d="M3 8h11v6h-3v-3H6v3H3z" fill="#2fa5df" /></svg>,
  <svg width="13" height="13"><path d="M0 0h13v8l-5 5H0z" fill="#fde300" /><path d="M6 13V9l7-2v2l-5 4z" fill="#222" /></svg>,
  <svg width="17" height="17"><circle cx="8.500" cy="8.500" r="8.200" fill="#1ed760" /><path d="M4 6q5-1.500 10 1M4.500 9q4.500-1.200 8 .9M5 11.700q4-1 6.500 .8" fill="none" stroke="#0c2b16" strokeWidth="1.600" /></svg>,
  <TeamViewer s={16} />,
  <svg width="17" height="17" viewBox="0 0 17 17"><path d="M.5 16.500l1.200-4.200A8 8 0 114.800 15.300z" fill="#fff" /><circle cx="8.700" cy="8.200" r="6.600" fill="#2fc351" /><path d="M5.500 5q1-1.500 1.700 0l.5 1.300-.8 1q1 2 2.800 2.700l1-1 1.700 1q0 2-2.400 1.800Q6 11 5.500 5z" fill="#fff" /></svg>,
  <svg width="16" height="16"><circle cx="8" cy="8" r="7.500" fill="#5dcb17" /><path d="M1 5q7-8 14 0z" fill="#c0f08f" /><path d="M0 6.500h16v3H0z" fill="#f5fff0" /></svg>,
  <svg width="17" height="17"><path d="M1 5q3-6 10-4 6 3 5 9-2 6-8 6-6-1-7-6z" fill="#1b5fb4" /><path d="M2 4q4-3 9-1l4 6q-2 5-6 6" fill="#3f92dd" /><path d="M1 7l8-2 3 5-8 4z" fill="#f3f7fb" /><path d="M1 7l6 3 2-5" stroke="#8ea3b5" fill="none" /></svg>,
  <IS s={15} />,
  <svg width="18" height="17"><path d="M1 9q1-6 8-6 6 0 6 4-1 2-4 1.500-1 2 0 4Q9 15 5 15 1 14 1 9z" fill="#dcecf8" /><circle cx="4" cy="10" r="1.500" fill="#e53c3c" /><circle cx="6" cy="6" r="1.500" fill="#3ba945" /><circle cx="10" cy="5" r="1.500" fill="#f0b400" /><circle cx="7" cy="12.500" r="1.500" fill="#3a6cdd" /><path d="M14 1h3v5h-3z" fill="#b55e20" /><path d="M14.500 6h2v9h-2z" fill="#f08a2a" /></svg>,
  <svg width="15" height="16"><path d="M3 .5h11.500v14H3z" fill="#fff" stroke="#3e9a4c" /><path d="M0 3l3-.5v12L0 13z" fill="#36964a" /><path d="M4.500 5l6.500 7.500M10.500 4.500l-6 8.500" stroke="#1c7a34" strokeWidth="2.200" /></svg>,
  <svg width="16" height="17"><path d="M3 2h12l-1 14H1z" fill="#a3d5e2" /><path d="M15 2l-1 14h-2z" fill="#d9c896" /><path d="M4 6h9M4 8h9M3 10h9M3 12h9" stroke="#6faabd" /><path d="M3 0v3M6 0v3M9 0v3M12 0v3" stroke="#ddd" /></svg>,
  <svg width="15" height="15" viewBox="0 0 16 16"><circle cx="8" cy="8" r="7.700" fill="#fbc116" /><path d="M1.300 4A7.700 7.700 0 0114.800 4.500H8L5 9.500z" fill="#e33b2e" /><path d="M1.300 4L5.200 10.500 8.500 11.500 7 15.700A7.700 7.700 0 011.300 4z" fill="#2da94f" /><circle cx="8" cy="8" r="3.700" fill="#fff" /><circle cx="8" cy="8" r="2.900" fill="#4286f5" /></svg>,
];

function LocalTaskbar() {
  return (
    <footer className={"flex h-[30px] shrink-0 items-center bg-[#0a0a0a] text-[12px] text-white " + ui}>
      <div className="ml-[10px]"><Win s={16} /></div>
      <div className="ml-[20px] h-[16px] w-[16px] rounded-full border-[2.500px] border-white" />
      <svg className="ml-[20px]" width="17" height="16" fill="none" stroke="#fff" strokeWidth="1.300"><path d="M.7 0v2.500h10V0M.7 16v-2.500h10V16M.7 5.500h10v5H.7zM14.500 0v16" /><path d="M13 4h3v3h-3z" fill="#fff" stroke="none" /></svg>
      <div className="ml-[11px] flex h-[30px]">
        {apps.map((a, i) => (
          <div key={i} className="flex w-[37px] flex-col items-center">
            <div className="flex h-[28px] items-center">{a}</div>
            <div className="h-[2px] w-[28px] bg-[#fbe8a8]" />
          </div>
        ))}
      </div>
      <div className="ml-auto flex h-[30px] items-center">
        <svg width="16" height="16" fill="none" stroke="#fff" strokeWidth="1.200"><circle cx="11" cy="3.500" r="2.700" /><circle cx="5" cy="8" r="2.300" /><path d="M1 15q0-4.500 4-4.500T9 14M8 9q3-4 7 1" /></svg>
        <svg className="ml-[14px]" width="12" height="7"><path d="M1 6l5-5 5 5" fill="none" stroke="#fff" strokeWidth="1.400" /></svg>
        <svg className="ml-[11px]" width="17" height="15"><path d="M8 .5q8 0 8 5t-7 5.500L5 14.500V10.500Q.5 9 .5 5.500 1 1 8 .5z" fill="#fdd544" /><path d="M5 5.500h1.500M8 5.500h1.500M11 5.500h1.500" stroke="#a07000" strokeWidth="1.500" /></svg>
        <svg className="ml-[8px]" width="16" height="14" fill="none" stroke="#fff"><path d="M.5 5h3l3-3.500v11L3.500 9h-3zM9 5q1.500 2 0 4.500M11 3q3 4 0 8.500" /><path d="M13.500 1q4 6 0 12" stroke="#888" /></svg>
        <svg className="ml-[8px]" width="17" height="14" fill="none" stroke="#fff" strokeWidth="1.200"><path d="M5 2h11v7.500H2.500V5M8 9.500v3M5 12.800h7" /><path d="M.6 .6h4v4h-4z" /></svg>
        <T w={27} c="ml-[10px] text-[12px]">13:54</T>
        <svg className="ml-[17px]" width="17" height="17" fill="none" stroke="#fff" strokeWidth="1.300"><path d="M.7 1h15.600v11.500H11l-2.500 3-2.500-3H.7z" /></svg>
        <div className="ml-[20px] h-[30px] w-[5px] border-l border-[#555]" />
      </div>
    </footer>
  );
}

export default function App() {
  return (
    <div className="flex h-[768px] w-[1366px] flex-col overflow-hidden bg-[#1a1a1a] font-['Liberation_Sans',Arial,sans-serif]">
      <ClientBar />
      <main className="relative ml-[42px] h-[716px] w-[1281px] shrink-0 overflow-hidden">
        <div className="ml-[295px] h-px w-[692px] bg-white" />
        <BackWindow />
        <OrderWindow />
        <SessionBar />
        <ErrorDialog />
        <RemoteTaskbar />
      </main>
      <LocalTaskbar />
    </div>
  );
}
